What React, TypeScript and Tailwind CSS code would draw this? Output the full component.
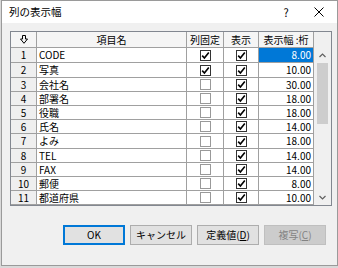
import React from 'react';

interface Row {
  no: number;
  name: string;
  fixed: boolean;
  show: boolean;
  width: string;
  h: string;
}

const rows: Row[] = [
  { no: 1, name: 'CODE', fixed: true, show: true, width: '8.00', h: 'h-[15px]' },
  { no: 2, name: '写真', fixed: true, show: true, width: '10.00', h: 'h-[15px]' },
  { no: 3, name: '会社名', fixed: false, show: true, width: '30.00', h: 'h-[14px]' },
  { no: 4, name: '部署名', fixed: false, show: true, width: '18.00', h: 'h-[14px]' },
  { no: 5, name: '役職', fixed: false, show: true, width: '18.00', h: 'h-[14px]' },
  { no: 6, name: '氏名', fixed: false, show: true, width: '14.00', h: 'h-[14px]' },
  { no: 7, name: 'よみ', fixed: false, show: true, width: '18.00', h: 'h-[15px]' },
  { no: 8, name: 'TEL', fixed: false, show: true, width: '14.00', h: 'h-[14px]' },
  { no: 9, name: 'FAX', fixed: false, show: true, width: '14.00', h: 'h-[14px]' },
  { no: 10, name: '郵便', fixed: false, show: true, width: '8.00', h: 'h-[14px]' },
  { no: 11, name: '都道府県', fixed: false, show: true, width: '10.00', h: 'h-[14px]' },
];

const Check = ({ on }: { on: boolean }) => (
  <div
    className={`w-[11px] h-[11px] border bg-white flex items-center justify-center ${
      on ? 'border-[#333333]' : 'border-[#999999]'
    }`}
  >
    {on && (
      <svg width="9" height="9" viewBox="0 0 9 9">
        <path d="M1.2 4.6 L3.4 7 L7.8 1.4" fill="none" stroke="#000" strokeWidth="1.6" />
      </svg>
    )}
  </div>
);

const Button = ({
  children,
  primary,
  disabled,
}: {
  children: React.ReactNode;
  primary?: boolean;
  disabled?: boolean;
}) => (
  <div
    className={`w-[62px] h-[20px] flex items-center justify-center text-[10px] leading-none ${
      disabled
        ? 'bg-[#cccccc] border border-[#bfbfbf] text-[#838383]'
        : primary
        ? 'bg-[#e1e1e1] border-2 border-[#0078d7] text-black'
        : 'bg-[#e1e1e1] border border-[#adadad] text-black'
    }`}
  >
    {children}
  </div>
);

export default function App() {
  return (
    <div className="w-[338px] h-[268px] bg-[#d9d9d9] font-['Noto_Sans_CJK_JP','Noto_Sans',sans-serif] text-black">
      <div className="w-[337px] h-[266px] ml-[1px] border border-[#9a9a9a] bg-[#f0f0f0] flex flex-col">
        {/* Title bar */}
        <div className="h-[22px] bg-white flex items-center pl-[7px] text-[10.5px] leading-none">
          <span className="flex-1">列の表示幅</span>
          <span className="w-[12px] text-center mr-[22px] text-[11px]">?</span>
          <svg width="10" height="10" viewBox="0 0 10 10" className="mr-[13px]">
            <path d="M0.5 0.5 L9.5 9.5 M9.5 0.5 L0.5 9.5" stroke="#000" strokeWidth="1" />
          </svg>
        </div>

        {/* Client */}
        <div className="flex-1 flex flex-col pl-[8px] pt-[8px]">
          {/* Grid */}
          <div className="w-[322px] border border-[#828790] bg-[#f0f0f0] flex text-[10px] leading-none">
            <div className="flex flex-col">
              {/* Header */}
              <div className="flex h-[16px] bg-[#f5f5f5] border-b border-[#a0a0a0]">
                <div className="w-[26px] border-r border-[#a0a0a0] flex items-center justify-center">
                  <svg width="8" height="9" viewBox="0 0 8 9">
                    <path d="M2.5 0.5 H5.5 V4 H7.5 L4 8.3 L0.5 4 H2.5 Z" fill="none" stroke="#000" strokeWidth="1" />
                  </svg>
                </div>
                <div className="w-[150px] border-r border-[#a0a0a0] flex items-center justify-center">項目名</div>
                <div className="w-[37px] border-r border-[#a0a0a0] flex items-center justify-center">列固定</div>
                <div className="w-[35px] border-r border-[#a0a0a0] flex items-center justify-center">表示</div>
                <div className="w-[55px] border-r border-[#a0a0a0] flex items-center justify-center">表示幅 :桁</div>
              </div>
              {/* Rows */}
              {rows.map((r) => (
                <div key={r.no} className={`flex ${r.h} border-b border-[#a0a0a0]`}>
                  <div className="w-[26px] bg-[#efefef] border-r border-[#a0a0a0] flex items-center justify-center">
                    {r.no}
                  </div>
                  <div className="w-[150px] bg-white border-r border-[#a0a0a0] flex items-center pl-[2px]">
                    {r.name}
                  </div>
                  <div className="w-[37px] bg-white border-r border-[#a0a0a0] flex items-center justify-center">
                    <Check on={r.fixed} />
                  </div>
                  <div className="w-[35px] bg-white border-r border-[#a0a0a0] flex items-center justify-center">
                    <Check on={r.show} />
                  </div>
                  <div
                    className={`w-[55px] border-r border-[#a0a0a0] flex items-center justify-end pr-[2px] ${
                      r.no === 1 ? 'bg-[#0078d7] text-white' : 'bg-white'
                    }`}
                  >
                    {r.width}
                  </div>
                </div>
              ))}
            </div>

            {/* Scrollbar */}
            <div className="w-[17px] flex flex-col">
              <div className="h-[16px]" />
              <div className="h-[15px] flex items-center justify-center">
                <svg width="7" height="5" viewBox="0 0 7 5">
                  <path d="M0.5 4 L3.5 1 L6.5 4" fill="none" stroke="#606060" strokeWidth="1.2" />
                </svg>
              </div>
              <div className="flex-1 flex flex-col">
                <div className="h-[61px] mx-[3px] bg-[#cdcdcd]" />
              </div>
              <div className="h-[15px] flex items-center justify-center">
                <svg width="7" height="5" viewBox="0 0 7 5">
                  <path d="M0.5 1 L3.5 4 L6.5 1" fill="none" stroke="#606060" strokeWidth="1.2" />
                </svg>
              </div>
            </div>
          </div>

          {/* Buttons */}
          <div className="flex justify-end gap-[5px] mt-[19px] pr-[11px]">
            <Button primary>OK</Button>
            <Button>キャンセル</Button>
            <Button>
              定義値(<span className="underline">D</span>)
            </Button>
            <Button disabled>
              複写(<span className="underline">C</span>)
            </Button>
          </div>
        </div>
      </div>
    </div>
  );
}
